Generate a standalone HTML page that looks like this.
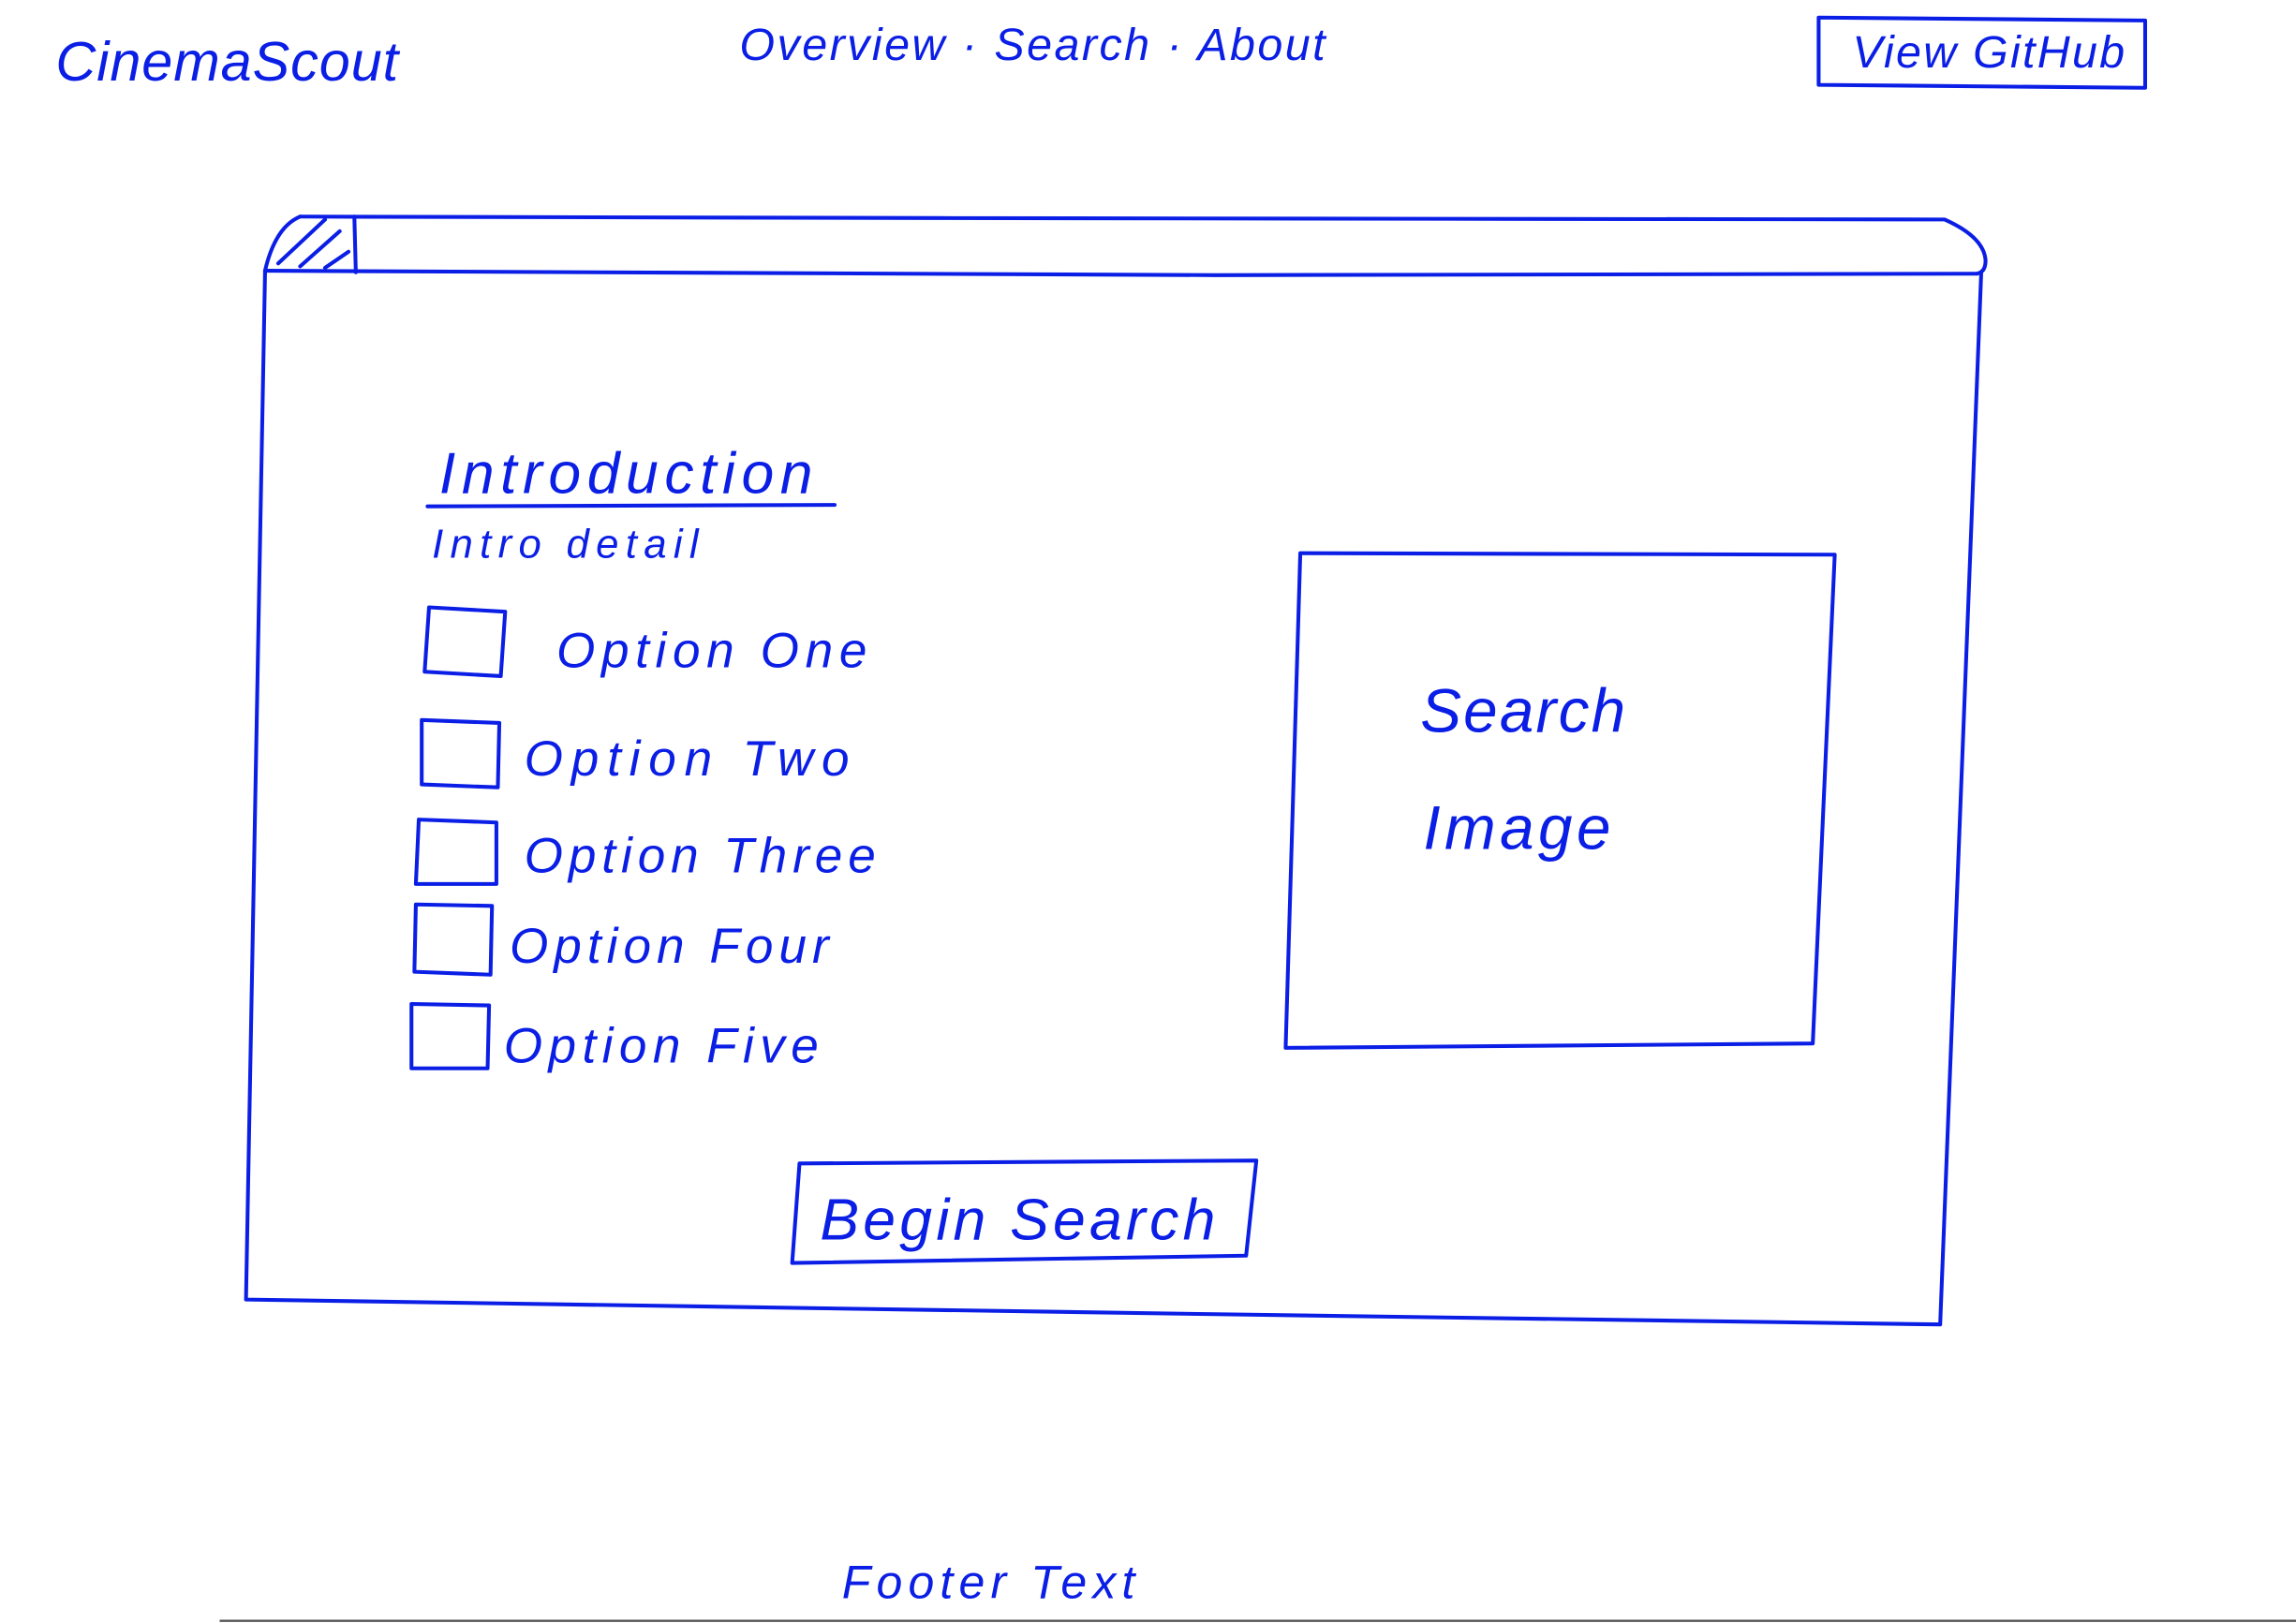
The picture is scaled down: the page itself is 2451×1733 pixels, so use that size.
<!DOCTYPE html>
<html><head><meta charset="utf-8"><style>
html,body{margin:0;padding:0;background:#fff;}
svg{display:block;}
text{font-family:"Liberation Sans",sans-serif;font-style:italic;fill:#0a1ee6;}
</style></head><body>
<svg width="2451" height="1733" viewBox="0 0 1568 1109" preserveAspectRatio="none" xmlns="http://www.w3.org/2000/svg">
<rect width="1568" height="1109" fill="#fff"/>
<g stroke="#0a1ee6" stroke-width="2.6" fill="none" stroke-linecap="round" stroke-linejoin="round">
<path d="M1242 12 L1465 14 L1465 60 L1242 58 Z"/>
<path d="M205 148 L640 149 L1328 150 Q1355 162 1356 178 Q1356 186 1350 187"/>
<path d="M205 148 Q188 155 181 185"/>
<path d="M181 185 L830 188 L1350 187"/>
<path d="M242 148 L243 186"/>
<path d="M190 180 L222 150 M205 182 L232 158 M222 183 L238 172"/>
<path d="M181 186 L168 888 L830 898 L1325 905 L1353 187"/>
<path d="M292 346 L570 345"/>
<path d="M293 415 L345 418 L342 462 L290 459 Z"/>
<path d="M288 492 L341 494 L340 538 L288 536 Z"/>
<path d="M286 560 L339 562 L339 604 L284 604 Z"/>
<path d="M284 618 L336 619 L335 666 L283 664 Z"/>
<path d="M281 686 L334 687 L333 730 L281 730 Z"/>
<path d="M888 378 L1253 379 L1238 713 L878 716 Z"/>
<path d="M546 795 L858 793 L851 858 L541 863 Z"/>
</g>
<line x1="150" y1="1107.5" x2="1568" y2="1107.5" stroke="#555" stroke-width="1.5"/>
<text x="38" y="55" font-size="38" textLength="234" lengthAdjust="spacing">CinemaScout</text>
<text x="505" y="41" font-size="31" textLength="400" lengthAdjust="spacing">Overview · Search · About</text>
<text x="1265" y="46" font-size="31" textLength="186" lengthAdjust="spacing">View GitHub</text>
<text x="300" y="337" font-size="40" textLength="255" lengthAdjust="spacing">Introduction</text>
<text x="295" y="381" font-size="28" textLength="182" lengthAdjust="spacing">Intro detail</text>
<text x="380" y="456" font-size="34" textLength="212" lengthAdjust="spacing">Option One</text>
<text x="358" y="530" font-size="34" textLength="222" lengthAdjust="spacing">Option Two</text>
<text x="358" y="596" font-size="34" textLength="240" lengthAdjust="spacing">Option Three</text>
<text x="348" y="658" font-size="34" textLength="218" lengthAdjust="spacing">Option Four</text>
<text x="344" y="726" font-size="34" textLength="215" lengthAdjust="spacing">Option Five</text>
<text x="970" y="500" font-size="42" textLength="140" lengthAdjust="spacing">Search</text>
<text x="972" y="580" font-size="42" textLength="128" lengthAdjust="spacing">Image</text>
<text x="560" y="847" font-size="40" textLength="270" lengthAdjust="spacing">Begin Search</text>
<text x="575" y="1092" font-size="32" textLength="200" lengthAdjust="spacing">Footer Text</text>
</svg>
</body></html>
